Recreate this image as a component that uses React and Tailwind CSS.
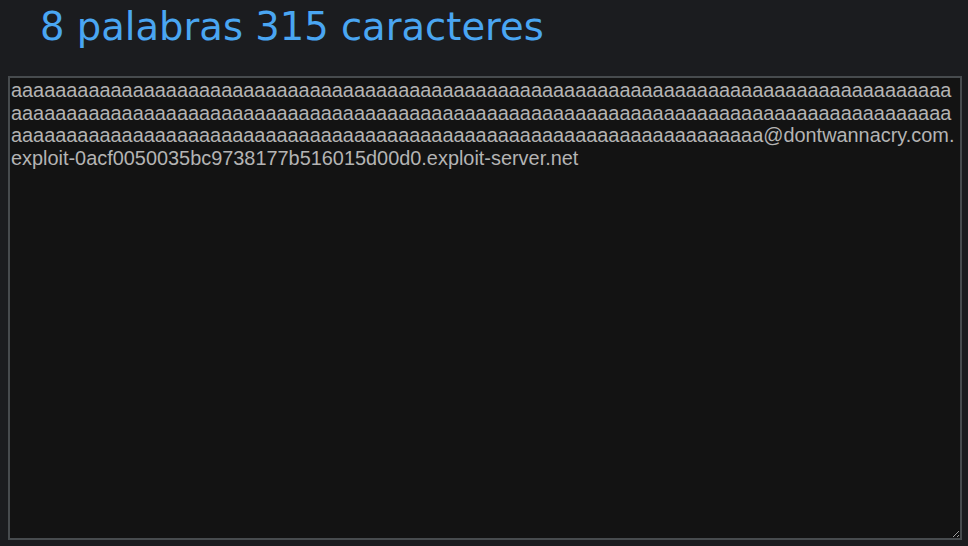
const text =
  'a'.repeat(238) +
  '@dontwannacry.com.exploit-0acf0050035bc9738177b516015d00d0.exploit-server.net';

export default function App() {
  return (
    <div className="flex min-h-[546px] flex-col bg-[#1b1c1f] px-2 pb-[6px] font-['Liberation_Sans',Arial,sans-serif]">
      <h1 className="pl-8 pt-[3px] pb-[25px] font-['DejaVu_Sans',sans-serif] text-[38.5px] leading-[48px] text-[#4aa6f2]">
        8 palabras 315 caracteres
      </h1>
      <textarea
        readOnly
        value={text}
        className="block h-[464px] w-[954px] border-2 border-[#474b4e] bg-[#131313] p-px text-[19.9px] leading-[22.7px] text-[#b4b4b4] outline-none"
      />
    </div>
  );
}
